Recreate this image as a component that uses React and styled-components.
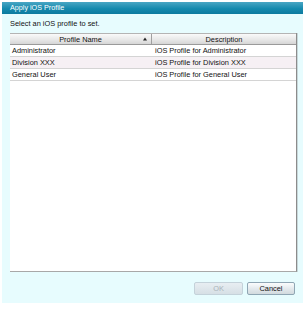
import React from 'react'
import styled, { createGlobalStyle } from 'styled-components'

const GlobalStyle = createGlobalStyle`
  html, body {
    margin: 0;
    padding: 0;
    background: #ffffff;
  }
  body {
    font-family: "Liberation Sans", Arial, sans-serif;
  }
`

const profiles = [
  { name: 'Administrator', description: 'iOS Profile for Administrator' },
  { name: 'Division XXX', description: 'iOS Profile for Division XXX' },
  { name: 'General User', description: 'iOS Profile for General User' },
]

const Page = styled.div`
  width: 308px;
  height: 309px;
  padding: 2px 0 0 2px;
  box-sizing: border-box;
`

const Dialog = styled.div`
  width: 301px;
  height: 301px;
  display: flex;
  flex-direction: column;
  background: #e7fcfe;
`

const TitleBar = styled.div`
  height: 12px;
  padding-left: 8px;
  display: flex;
  align-items: center;
  background: linear-gradient(#4aa6c4, #168aae 55%, #0c7a9f);
  color: #ffffff;
  font-size: 7.2px;
  line-height: 12px;
`

const Prompt = styled.div`
  height: 19px;
  padding-left: 8px;
  display: flex;
  align-items: center;
  color: #111111;
  font-size: 7.4px;
`

const Table = styled.div`
  flex: 1;
  margin: 0 6px 0 8px;
  background: #ffffff;
  border-right: 1px solid #8c8c8c;
  border-bottom: 1px solid #a8a8a8;
  box-shadow: 1px 0 0 #c8d8da;
  display: flex;
  flex-direction: column;
`

const Row = styled.div`
  display: grid;
  grid-template-columns: 141px 1fr;
  height: 12px;
  box-sizing: border-box;
  border-bottom: 1px solid ${p => (p.$header ? '#9a9a9a' : '#d4d4d4')};
  background: ${p =>
    p.$header
      ? 'linear-gradient(#fafafa, #e6e6e6 60%, #d6d6d6)'
      : p.$alt
        ? '#f6f0f4'
        : '#ffffff'};
  border-top: ${p => (p.$header ? '1px solid #b4b4b4' : 'none')};
`

const Cell = styled.div`
  position: relative;
  display: flex;
  align-items: center;
  justify-content: ${p => (p.$header ? 'center' : 'flex-start')};
  padding-left: ${p => (p.$header ? '0' : p.$second ? '4px' : '2px')};
  font-size: 7.4px;
  color: #111111;
  white-space: nowrap;
  border-left: ${p => (p.$divider ? '1px solid #a0a0a0' : 'none')};
`

const SortArrow = styled.span`
  position: absolute;
  right: 4px;
  top: 50%;
  transform: translateY(-50%);
  width: 0;
  height: 0;
  border-left: 2px solid transparent;
  border-right: 2px solid transparent;
  border-bottom: 3px solid #222;
`

const Footer = styled.div`
  height: 31px;
  display: flex;
  justify-content: flex-end;
  align-items: center;
  gap: 4px;
  padding: 1px 8px 0 0;
  box-sizing: border-box;
`

const Button = styled.button`
  width: ${p => p.$width}px;
  height: 13px;
  padding: 0;
  border-radius: 2px;
  font-family: inherit;
  font-size: 7.4px;
  border: 1px solid ${p => (p.disabled ? '#c4d2da' : '#8fa6b4')};
  background: ${p =>
    p.disabled
      ? 'linear-gradient(#e8eef2, #d6dfe5)'
      : 'linear-gradient(#fbfcfd, #e2e8ec 55%, #d2dade)'};
  color: ${p => (p.disabled ? '#a9b3b9' : '#111111')};
`

export default function App() {
  return (
    <Page>
      <GlobalStyle />
      <Dialog>
        <TitleBar>Apply iOS Profile</TitleBar>
        <Prompt>Select an iOS profile to set.</Prompt>
        <Table>
          <Row $header>
            <Cell $header>
              Profile Name
              <SortArrow />
            </Cell>
            <Cell $header $divider>
              Description
            </Cell>
          </Row>
          {profiles.map((p, idx) => (
            <Row key={p.name} $alt={idx % 2 === 1}>
              <Cell>{p.name}</Cell>
              <Cell $second>{p.description}</Cell>
            </Row>
          ))}
        </Table>
        <Footer>
          <Button $width={49} disabled>
            OK
          </Button>
          <Button $width={48}>Cancel</Button>
        </Footer>
      </Dialog>
    </Page>
  )
}
